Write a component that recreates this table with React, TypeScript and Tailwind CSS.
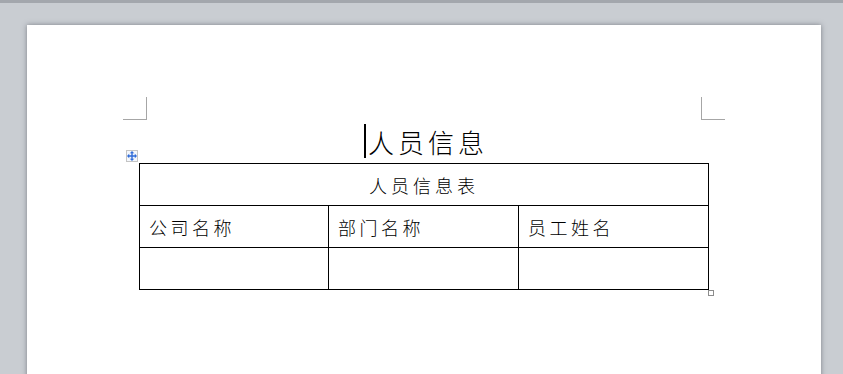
const cjk = "font-['Noto_Sans_CJK_SC','Noto_Sans',sans-serif] font-light";

const columns = ["公司名称", "部门名称", "员工姓名"];
const widths = ["w-[189px]", "w-[190px]", "w-[190px]"];

function MoveHandle() {
  return (
    <div className="absolute -left-[13px] -top-[13px] w-[12px] h-[12px] border border-[#c4c4c4] bg-[#f4f7fc] flex items-center justify-center">
      <svg width="10" height="10" viewBox="0 0 10 10">
        <path
          d="M5 0 L2.8 2.2 H4.3 V4.3 H2.2 V2.8 L0 5 L2.2 7.2 V5.7 H4.3 V7.8 H2.8 L5 10 L7.2 7.8 H5.7 V5.7 H7.8 V7.2 L10 5 L7.8 2.8 V4.3 H5.7 V2.2 H7.2 Z"
          fill="#2f6bd8"
        />
      </svg>
    </div>
  );
}

export default function App() {
  return (
    <div className="h-[374px] overflow-hidden bg-[#c9cdd2]">
      <div className="h-[3px] bg-[#a3a7ad]" />
      <div className="pl-[27px] pt-[22px]">
        <div className={`w-[794px] h-[420px] bg-white shadow-[0_0_5px_rgba(60,66,75,0.55)] px-[96px] pt-[72px] ${cjk}`}>
          {/* margin corner marks */}
          <div className="flex justify-between">
            <div className="w-[24px] h-[23px] border-r border-b border-[#a6a6a6]" />
            <div className="w-[24px] h-[23px] border-l border-b border-[#a6a6a6]" />
          </div>

          {/* title with caret */}
          <div className="h-[43px] flex items-center justify-center">
            <span className="inline-block w-[2px] h-[34px] bg-black mr-[2px] mb-[2px]" />
            <span className="text-[26px] leading-none tracking-[4px] text-black mr-[-4px]">人员信息</span>
          </div>

          <div className="flex justify-center">
            <div className="relative">
              <MoveHandle />
              <table className="border-collapse table-fixed w-[570px] text-black">
                <colgroup>
                  {widths.map((w, i) => (
                    <col key={i} className={w} />
                  ))}
                </colgroup>
                <tbody>
                  <tr>
                    <td colSpan={3} className="border border-black h-[42px] text-center text-[18px] tracking-[4px] leading-none">
                      人员信息表
                    </td>
                  </tr>
                  <tr>
                    {columns.map((c) => (
                      <td key={c} className="border border-black h-[42px] pl-[9px] text-[18px] tracking-[3.5px] leading-none">
                        {c}
                      </td>
                    ))}
                  </tr>
                  <tr>
                    {columns.map((c) => (
                      <td key={c} className="border border-black h-[42px]" />
                    ))}
                  </tr>
                </tbody>
              </table>
              <div className="absolute -right-[5px] -bottom-[6px] w-[6px] h-[6px] border border-[#8c8c8c] bg-white" />
            </div>
          </div>
        </div>
      </div>
    </div>
  );
}
